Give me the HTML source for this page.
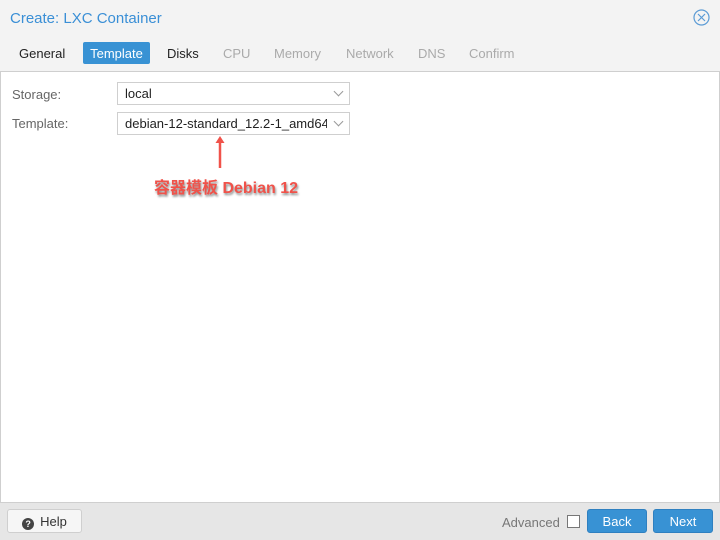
<!DOCTYPE html>
<html><head><style>
*{margin:0;padding:0;box-sizing:border-box}
body{width:720px;height:540px;background:#f3f3f3;font-family:"Liberation Sans","Noto Sans CJK SC",sans-serif;font-size:13px;position:relative;overflow:hidden;color:#333}
.a{position:absolute}
.tab{position:absolute;top:42px;height:22px;line-height:23px;font-size:13px;color:#222}
.dis{color:#aaa}
.field{position:absolute;left:117px;width:233px;height:23px;border:1px solid #cfcfcf;background:#fff;line-height:22px;padding-left:7px;font-size:13px;color:#222;white-space:nowrap;overflow:hidden}
.chev{position:absolute;right:7px;top:5px;width:7px;height:7px;border-right:1px solid #999;border-bottom:1px solid #999;transform:rotate(45deg)}
.btn{position:absolute;top:509px;height:24px;border-radius:3px;text-align:center;line-height:23px}
</style></head><body>
<div class="a" style="left:10px;top:10px;font-size:15px;color:#3a8fd6">Create: LXC Container</div>
<svg class="a" style="left:693px;top:9px" width="17" height="17" viewBox="0 0 17 17"><circle cx="8.5" cy="8.5" r="7.5" fill="none" stroke="#5b9bd5" stroke-width="1.2"/><path d="M5 5L12 12M12 5L5 12" stroke="#5b9bd5" stroke-width="1.2"/></svg>
<div class="tab" style="left:19px">General</div>
<div class="tab" style="left:83px;width:67px;background:#3892d4;color:#fff;text-align:center;border-radius:2px">Template</div>
<div class="tab" style="left:167px">Disks</div>
<div class="tab dis" style="left:223px">CPU</div>
<div class="tab dis" style="left:274px">Memory</div>
<div class="tab dis" style="left:346px">Network</div>
<div class="tab dis" style="left:418px">DNS</div>
<div class="tab dis" style="left:469px">Confirm</div>
<div class="a" style="left:0;top:71px;width:720px;height:432px;background:#fff;border:1px solid #cfcfcf"></div>
<div class="a" style="left:12px;top:87px;color:#666">Storage:</div>
<div class="a" style="left:12px;top:116px;color:#666">Template:</div>
<div class="field" style="top:82px">local<span class="chev"></span></div>
<div class="field" style="top:112px;padding-right:22px">debian-12-standard_12.2-1_amd64<span class="a" style="right:0;top:0;width:22px;height:21px;background:#fff"></span><span class="chev"></span></div>
<svg class="a" style="left:214px;top:134px" width="12" height="36"><path d="M6 4V34" stroke="#f0524a" stroke-width="2.5"/><path d="M1.5 9L6 2L10.5 9Z" fill="#f0524a"/></svg>
<div class="a" style="left:154px;top:174px;font-size:16px;font-weight:bold;color:#f0524a;text-shadow:1px 2px 2px rgba(0,0,0,.45)">容器模板 Debian 12</div>
<div class="a" style="left:0;top:503px;width:720px;height:37px;background:#e6e6e6"></div>
<div class="btn" style="left:7px;width:75px;background:#f6f6f6;border:1px solid #cfcfcf;color:#333"><span style="display:inline-block;width:12px;height:12px;border-radius:50%;background:#444;color:#fff;font-size:9px;line-height:12px;font-weight:bold;vertical-align:-1px;margin-right:6px">?</span>Help</div>
<div class="a" style="left:502px;top:515px;color:#777">Advanced</div>
<div class="a" style="left:567px;top:515px;width:13px;height:13px;border:1px solid #777;background:#fff"></div>
<div class="btn" style="left:587px;width:60px;background:#3892d4;border:1px solid #2f80c0;color:#fff">Back</div>
<div class="btn" style="left:653px;width:60px;background:#3892d4;border:1px solid #2f80c0;color:#fff">Next</div>
</body></html>
